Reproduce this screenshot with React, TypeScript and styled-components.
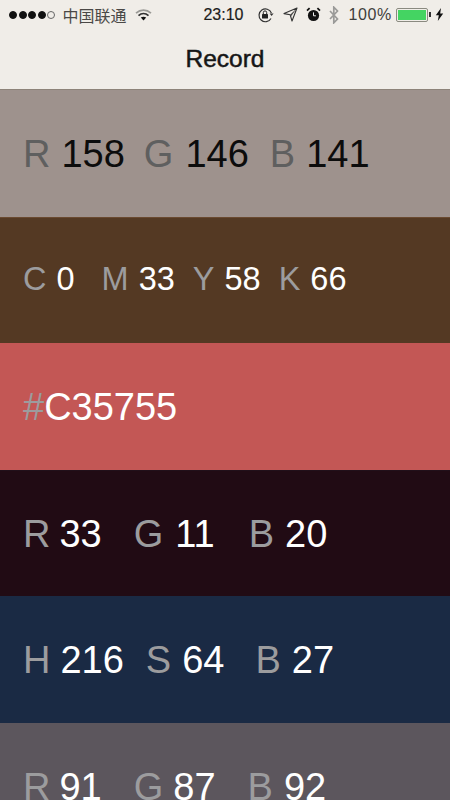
import React from "react";
import styled, { createGlobalStyle } from "styled-components";

const Global = createGlobalStyle`
  html, body { margin: 0; padding: 0; background: #5c565d; }
  #root { width: 450px; height: 800px; overflow: hidden; }
  * { box-sizing: border-box; }
`;

const Page = styled.div`
  width: 450px;
  height: 800px;
  overflow: hidden;
  font-family: "Liberation Sans", Arial, sans-serif;
`;

const Header = styled.header`
  height: 90px;
  background: #f0ede8;
  border-bottom: 1px solid #8d8379;
  display: flex;
  flex-direction: column;
`;

const StatusBar = styled.div`
  height: 29px;
  flex: none;
  display: flex;
  align-items: center;
  padding: 0 0 0 9px;
  color: #3c3a38;
`;

const Signal = styled.div`
  display: flex;
  gap: 1.6px;
`;

const Dot = styled.span<{ $empty?: boolean }>`
  width: 8px;
  height: 8px;
  border-radius: 50%;
  background: ${(p) => (p.$empty ? "transparent" : "#111")};
  border: 1px solid ${(p) => (p.$empty ? "#666" : "#111")};
`;

const Carrier = styled.span`
  margin-left: 7px;
  font-family: "Noto Sans CJK SC", "Liberation Sans", sans-serif;
  font-size: 16px;
  color: #4a4846;
`;

const Clock = styled.span`
  margin-left: 51px;
  font-size: 16px;
  color: #1c1c1c;
  width: 54px;
  -webkit-text-stroke: 0.2px #1c1c1c;
`;

const IconSlot = styled.svg<{ $left: number }>`
  margin-left: ${(p) => p.$left}px;
  flex: none;
`;

const Percent = styled.span`
  margin-left: 8px;
  font-size: 16px;
  letter-spacing: 0.6px;
  color: #3f3d3b;
`;

const Battery = styled.div`
  margin-left: 4px;
  width: 32px;
  height: 14px;
  border: 1px solid #8a8a80;
  border-radius: 2px;
  padding: 1px;
  display: flex;
`;

const BatteryFill = styled.div`
  flex: 1;
  background: #44d462;
`;

const BatteryCap = styled.span`
  width: 2px;
  height: 5px;
  margin-left: 1px;
  background: #333;
`;

const Title = styled.h1`
  margin: 0;
  flex: 1;
  display: flex;
  align-items: center;
  justify-content: center;
  font-size: 24.5px;
  font-weight: 400;
  color: #161616;
  -webkit-text-stroke: 0.5px #161616;
`;

const Swatch = styled.section<{ $bg: string; $edge: string; $dark?: boolean; $size: number }>`
  height: 126.6px;
  flex: none;
  background: ${(p) => p.$bg};
  border-top: 1px solid ${(p) => p.$edge};
  display: flex;
  align-items: flex-start;
  padding-left: 23px;
  padding-top: ${(p) => (p.$size < 36 ? 39 : 41)}px;
  font-size: ${(p) => p.$size}px;
  line-height: 44px;
  color: ${(p) => (p.$dark ? "#0c0c0c" : "#fff")};
`;

const Channel = styled.span<{ $left?: number }>`
  margin-left: ${(p) => p.$left ?? 0}px;
  white-space: pre;
`;

const Label = styled.span<{ $dark?: boolean; $gap?: number }>`
  color: ${(p) => (p.$dark ? "#5f5f5f" : "#9c9c9e")};
  margin-right: ${(p) => p.$gap ?? 5}px;
`;

type Ch = { l: string; v: string; left?: number; gap?: number };
type Row = { bg: string; edge: string; dark?: boolean; size: number; ch: Ch[] };

const rows: Row[] = [
  {
    bg: "#9e928d", edge: "#9e928d", dark: true, size: 38,
    ch: [
      { l: "R", v: "158", gap: 11 },
      { l: "G", v: "146", left: 19, gap: 12 },
      { l: "B", v: "141", left: 21, gap: 11 },
    ],
  },
  {
    bg: "#543923", edge: "#6a4a30", size: 32.5,
    ch: [
      { l: "C", v: "0", gap: 10 },
      { l: "M", v: "33", left: 27, gap: 10 },
      { l: "Y", v: "58", left: 18, gap: 10 },
      { l: "K", v: "66", left: 18, gap: 10 },
    ],
  },
  {
    bg: "#c35755", edge: "#c35755", size: 38,
    ch: [{ l: "#", v: "C35755", gap: 0 }],
  },
  {
    bg: "#210b14", edge: "#21101a", size: 38,
    ch: [
      { l: "R", v: "33", gap: 9 },
      { l: "G", v: "11", left: 32, gap: 12 },
      { l: "B", v: "20", left: 34, gap: 11 },
    ],
  },
  {
    bg: "#1a2a44", edge: "#1a2a44", size: 38,
    ch: [
      { l: "H", v: "216", gap: 10 },
      { l: "S", v: "64", left: 22, gap: 11 },
      { l: "B", v: "27", left: 31, gap: 11 },
    ],
  },
  {
    bg: "#5c565d", edge: "#5c565d", size: 38,
    ch: [
      { l: "R", v: "91", gap: 9 },
      { l: "G", v: "87", left: 32, gap: 10 },
      { l: "B", v: "92", left: 32, gap: 11 },
    ],
  },
];

export default function App() {
  return (
    <Page>
      <Global />
      <Header>
        <StatusBar>
          <Signal>
            <Dot /><Dot /><Dot /><Dot /><Dot $empty />
          </Signal>
          <Carrier>中国联通</Carrier>
          <IconSlot $left={9} width="17" height="12" viewBox="0 0 17 12">
            <path d="M1 4.2C5.5 0.2 11.5 0.2 16 4.2" fill="none" stroke="#9a9a96" strokeWidth="1.7" />
            <path d="M3.5 6.6C6.5 4 10.5 4 13.5 6.6" fill="none" stroke="#333" strokeWidth="1.7" />
            <path d="M8.5 11.5L5.8 8.6C7.4 7.4 9.6 7.4 11.2 8.6Z" fill="#111" />
          </IconSlot>
          <Clock>23:10</Clock>
          <IconSlot $left={0} width="17" height="16" viewBox="0 0 17 16">
            <path d="M14 11.5A6.4 6.4 0 1 1 14.4 6" fill="none" stroke="#333" strokeWidth="1.2" />
            <path d="M12.6 6.6h4l-2 2.4z" fill="#333" />
            <rect x="5" y="7" width="6" height="4.6" rx="0.6" fill="#222" />
            <path d="M6.3 7V5.6a1.7 1.7 0 0 1 3.4 0V7" fill="none" stroke="#222" strokeWidth="1" />
          </IconSlot>
          <IconSlot $left={9} width="15" height="15" viewBox="0 0 15 15">
            <path d="M14 1L1 6.6l6.2 1.2L9 14z" fill="none" stroke="#333" strokeWidth="1.1" strokeLinejoin="round" />
            <path d="M14 1L7.2 7.8 7.9 9.6z" fill="#444" />
          </IconSlot>
          <IconSlot $left={8} width="15" height="15" viewBox="0 0 15 15">
            <circle cx="7.5" cy="8.5" r="5.6" fill="#111" />
            <path d="M1 3.6L3.6 1.2M14 3.6L11.4 1.2" stroke="#111" strokeWidth="1.8" />
            <path d="M7.5 5.4v3.4h2.4" fill="none" stroke="#eee" strokeWidth="1" />
          </IconSlot>
          <IconSlot $left={7} width="12" height="18" viewBox="0 0 12 18">
            <path d="M2 5l7.5 8L5.8 16.8V1.2L9.5 5 2 13" fill="none" stroke="#9a9a98" strokeWidth="1.7" />
          </IconSlot>
          <Percent>100%</Percent>
          <Battery><BatteryFill /></Battery>
          <BatteryCap />
          <IconSlot $left={4} width="9" height="13" viewBox="0 0 9 13">
            <path d="M6 0L0.8 7.2h3L2.8 13 8.2 5.4h-3z" fill="#111" />
          </IconSlot>
        </StatusBar>
        <Title>Record</Title>
      </Header>
      {rows.map((r, i) => (
        <Swatch key={i} $bg={r.bg} $edge={r.edge} $dark={r.dark} $size={r.size}>
          {r.ch.map((c, j) => (
            <Channel key={j} $left={c.left}>
              <Label $dark={r.dark} $gap={c.gap}>{c.l}</Label>
              {c.v}
            </Channel>
          ))}
        </Swatch>
      ))}
    </Page>
  );
}
